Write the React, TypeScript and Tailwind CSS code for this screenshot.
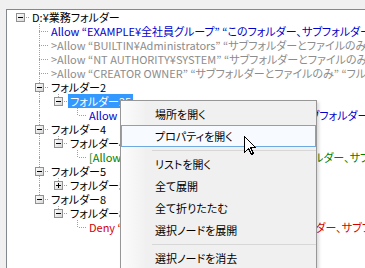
import React from "react";

type Cell = "blank" | "pipe" | "tee" | "ell" | "root";

interface Row {
  cells: Cell[];
  box?: "minus" | "plus";
  text: string;
  color?: string;
  selected?: boolean;
}

const rows: Row[] = [
  { cells: ["root"], box: "minus", text: "D:¥業務フォルダー" },
  { cells: ["blank", "tee"], text: "Allow “EXAMPLE¥全社員グループ” “このフォルダー、サブフォルダーおよびファイル”", color: "text-[#0000cc]" },
  { cells: ["blank", "tee"], text: ">Allow “BUILTIN¥Administrators” “サブフォルダーとファイルのみ” “フルコントロール”", color: "text-[#8c8c8c]" },
  { cells: ["blank", "tee"], text: ">Allow “NT AUTHORITY¥SYSTEM” “サブフォルダーとファイルのみ” “フルコントロール”", color: "text-[#8c8c8c]" },
  { cells: ["blank", "tee"], text: ">Allow “CREATOR OWNER” “サブフォルダーとファイルのみ” “フルコントロール”", color: "text-[#8c8c8c]" },
  { cells: ["blank", "tee"], box: "minus", text: "フォルダー2" },
  { cells: ["blank", "pipe", "ell"], box: "minus", text: "フォルダー25", selected: true },
  { cells: ["blank", "pipe", "blank", "ell"], text: "Allow “EXAMPLE¥経理部” “このフォルダー、サブフォルダーおよびファイル”", color: "text-[#0000cc]" },
  { cells: ["blank", "tee"], box: "minus", text: "フォルダー4" },
  { cells: ["blank", "pipe", "ell"], box: "minus", text: "フォルダー41" },
  { cells: ["blank", "pipe", "blank", "ell"], text: "[Allow “EXAMPLE¥営業部グループA” “このフォルダー、サブフォルダーおよびファイル”]", color: "text-[#008000]" },
  { cells: ["blank", "tee"], box: "minus", text: "フォルダー5" },
  { cells: ["blank", "pipe", "ell"], box: "plus", text: "フォルダー51" },
  { cells: ["blank", "ell"], box: "minus", text: "フォルダー8" },
  { cells: ["blank", "blank", "ell"], box: "minus", text: "フォルダー81" },
  { cells: ["blank", "blank", "blank", "ell"], text: "Deny “EXAMPLE¥派遣・契約社員1” “このフォルダー、サブフォルダーおよびファイル”", color: "text-[#d40000]" },
];

const LINE = "#a0a0a0";

function GuideCell({ type, box }: { type: Cell; box?: "minus" | "plus" }) {
  const vTop = type === "pipe" || type === "tee" || type === "ell";
  const vBottom = type === "pipe" || type === "tee";
  const horiz = type === "tee" || type === "ell" || type === "root";
  return (
    <svg width="19" height="14" className="shrink-0" shapeRendering="crispEdges">
      {vTop && (
        <line x1="9.5" y1="0" x2="9.5" y2={box ? 3 : 7} stroke={LINE} strokeDasharray="1 1" />
      )}
      {vBottom && (
        <line x1="9.5" y1={box ? 12 : 8} x2="9.5" y2="14" stroke={LINE} strokeDasharray="1 1" />
      )}
      {vTop && vBottom && !box && (
        <line x1="9.5" y1="7" x2="9.5" y2="8" stroke={LINE} />
      )}
      {horiz && (
        <line x1={box ? 15 : 11} y1="7.5" x2="19" y2="7.5" stroke={LINE} strokeDasharray="1 1" />
      )}
      {box && (
        <g>
          <defs>
            <linearGradient id="bx" x1="0" y1="0" x2="1" y2="1">
              <stop offset="0" stopColor="#ffffff" />
              <stop offset="1" stopColor="#d6d6d6" />
            </linearGradient>
          </defs>
          <rect x="5.5" y="3.5" width="8" height="8" fill="url(#bx)" stroke="#919191" />
          <line x1="7" y1="7.5" x2="12" y2="7.5" stroke="#000" />
          {box === "plus" && <line x1="9.5" y1="5" x2="9.5" y2="10" stroke="#000" />}
        </g>
      )}
    </svg>
  );
}

function TreeRow({ row }: { row: Row }) {
  return (
    <div className="flex h-[14px] items-center whitespace-nowrap">
      {row.cells.map((c, i) => (
        <GuideCell key={i} type={c} box={i === row.cells.length - 1 ? row.box : undefined} />
      ))}
      <span
        className={
          row.selected
            ? "h-[14px] bg-[#3399ff] px-[2px] leading-[14px] text-white"
            : `h-[14px] px-[2px] leading-[14px] ${row.color ?? "text-black"}`
        }
      >
        {row.text}
      </span>
    </div>
  );
}

const menu: (string | null)[] = [
  "場所を開く",
  "プロパティを開く",
  null,
  "リストを開く",
  "全て展開",
  "全て折りたたむ",
  "選択ノードを展開",
  null,
  "選択ノードを消去",
];

export default function App() {
  return (
    <div className="relative h-[268px] w-[365px] overflow-hidden bg-[#f0f0f0] pl-[6px] pt-[9px] font-['Noto_Sans_CJK_JP',sans-serif] text-[11px] [font-feature-settings:'palt']">
      {/* tree view */}
      <div className="h-full overflow-hidden border-l border-t border-[#828790] bg-white pl-[4px]">
        {rows.map((r, i) => (
          <TreeRow key={i} row={r} />
        ))}
      </div>

      {/* context menu */}
      <div className="absolute left-[120px] top-[100px] w-[197px] border border-[#979797] bg-[linear-gradient(to_right,#fcfcfc,#f1f1f1_24px,#f0f0f0_24px)] pt-[2px] shadow-[2px_2px_3px_rgba(0,0,0,0.15)]">
        {menu.map((m, i) =>
          m === null ? (
            <div key={i} className="h-[6px] pt-[3px] pl-[31px]">
              <div className="h-px bg-[#d7d7d7]" />
            </div>
          ) : (
            <div
              key={i}
              className={
                m === "プロパティを開く"
                  ? "flex h-[22px] items-center border border-[#6ea8e0] bg-[#f7fbff] pl-[33px] leading-none text-black"
                  : "flex h-[22px] items-center pl-[34px] leading-none text-black"
              }
            >
              {m}
            </div>
          )
        )}
      </div>

      {/* mouse cursor */}
      <svg className="absolute left-[244px] top-[136px]" width="13" height="20" shapeRendering="crispEdges">
        <polygon
          points="0.5,0.5 0.5,16.5 4.5,12.5 7.5,18.5 9.5,17.5 6.5,11.5 11.5,11.5"
          fill="#fff"
          stroke="#000"
        />
      </svg>
    </div>
  );
}
